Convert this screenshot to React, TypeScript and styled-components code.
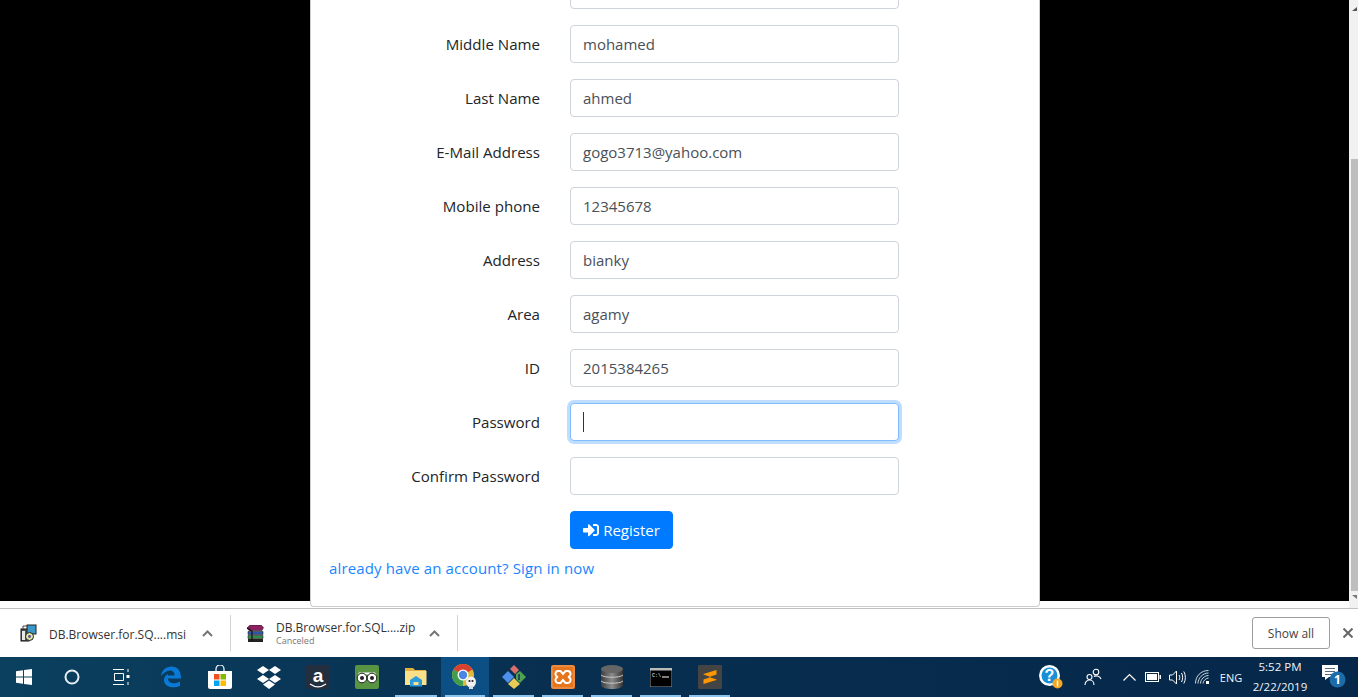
import React, { FC } from "react";
import styled, { createGlobalStyle } from "styled-components";
import { FaSignInAlt } from "react-icons/fa";

const UI_FONT = `"Open Sans", "Noto Sans", sans-serif`;

const fields = [
    { label: "", value: "" },
    { label: "Middle Name", value: "mohamed" },
    { label: "Last Name", value: "ahmed" },
    { label: "E-Mail Address", value: "gogo3713@yahoo.com" },
    { label: "Mobile phone", value: "12345678" },
    { label: "Address", value: "bianky" },
    { label: "Area", value: "agamy" },
    { label: "ID", value: "2015384265" },
    { label: "Password", value: "", focused: true },
    { label: "Confirm Password", value: "" },
];

const WindowsIcon = () => (
    <svg width="16" height="16" viewBox="0 0 16 16" fill="#fff">
        <path d="M0 2.300 7 1.200V7.500H0ZM8 1 16 0V7.500H8ZM0 8.500H7V14.800L0 13.700ZM8 8.500H16V16L8 15Z" />
    </svg>
);

const CortanaIcon = () => (
    <svg width="16" height="16" viewBox="0 0 16 16" fill="none">
        <circle cx="8" cy="8" r="6.500" stroke="#e8f0f5" strokeWidth="2" />
    </svg>
);

const TaskViewIcon = () => (
    <svg width="17" height="16" viewBox="0 0 17 16" fill="none" stroke="#fff">
        <path d="M0 .5H11M0 15.500H11M1.500 4.500H10.500V11.500H1.500ZM15 0V3M15 13V16" />
        <rect x="13.500" y="6" width="3" height="3" fill="#fff" stroke="none" />
    </svg>
);

const EdgeIcon = () => (
    <svg width="22" height="22" viewBox="0 0 22 22">
        <path
            fill="#0a78d7"
            d="M1 10C2 4 6 .5 11.500 .5 17 .5 21 4 21 12.500H8C8 17 14 19 20 15.500V20C13 23 4 21 4 14 4 11 5.500 9 8.500 7.500 7.500 9 7.500 10 7.500 9.500H14.500C14.500 6 12.500 4.500 10 4.500 6.500 4.500 3.500 7 1 10Z"
        />
    </svg>
);

const StoreIcon = () => (
    <svg width="24" height="24" viewBox="0 0 24 24">
        <path d="M8 6V4A4 4 0 0 1 16 4V6" fill="none" stroke="#fff" strokeWidth="1.200" />
        <path d="M0 6H24V22A2 2 0 0 1 22 24H2A2 2 0 0 1 0 22Z" fill="#fff" />
        <rect x="6" y="9" width="5.500" height="5.500" fill="#f25022" />
        <rect x="12.500" y="9" width="5.500" height="5.500" fill="#7fba00" />
        <rect x="6" y="15.500" width="5.500" height="5.500" fill="#00a4ef" />
        <rect x="12.500" y="15.500" width="5.500" height="5.500" fill="#ffb900" />
    </svg>
);

const DropboxIcon = () => (
    <svg width="24" height="23" viewBox="0 0 24 23" fill="#fff">
        <path d="M6 0 12 4 6 8 0 4ZM18 0 24 4 18 8 12 4ZM6 9 12 13 6 17 0 13ZM18 9 24 13 18 17 12 13ZM6 18.500 12 14.500 18 18.500 12 23Z" />
    </svg>
);

const AmazonIcon = () => (
    <svg width="24" height="24" viewBox="0 0 24 24">
        <rect width="24" height="24" rx="2" fill="#232f3e" />
        <text x="12" y="16.500" textAnchor="middle" fontFamily="Liberation Sans" fontWeight="700" fontSize="19" fill="#fff">a</text>
        <path d="M4 19C9 22.500 15 22.500 20 19" fill="none" stroke="#fff" strokeWidth="1.200" />
    </svg>
);

const TripAdvisorIcon = () => (
    <svg width="24" height="24" viewBox="0 0 24 24">
        <rect width="24" height="24" rx="2" fill="#589442" />
        <path d="M4 7.500H20L21 9.500H3Z" fill="#fff" />
        <circle cx="7" cy="13" r="4.800" fill="#fff" stroke="#222" />
        <circle cx="17" cy="13" r="4.800" fill="#fff" stroke="#222" />
        <circle cx="7" cy="13" r="2" fill="#222" />
        <circle cx="17" cy="13" r="2" fill="#222" />
    </svg>
);

const FolderIcon = () => (
    <svg width="22" height="20" viewBox="0 0 22 20">
        <path d="M0 1H8L10 3H21V5H0Z" fill="#e2b23d" />
        <rect y="4" width="21.500" height="14" fill="#fbe08c" />
        <path d="M5 18V13L11 9 17 13V18H13.500V15H8.500V18Z" fill="#2c9cdc" />
        <rect x="5" y="18" width="12" height="1.500" fill="#2c9cdc" />
    </svg>
);

const ChromeIcon = () => (
    <svg width="26" height="26" viewBox="0 0 26 26">
        <circle cx="11" cy="11" r="11" fill="#e0b93a" />
        <path d="M11 11 1.500 5.500A11 11 0 0 1 20.500 5.500Z" fill="#d8402f" />
        <path d="M11 11 1.500 5.500A11 11 0 0 0 11 22Z" fill="#3f9e4d" />
        <circle cx="11" cy="11" r="5.500" fill="#fff" />
        <circle cx="11" cy="11" r="4.200" fill="#4a86e0" />
        <ellipse cx="19" cy="18" rx="5" ry="5.500" fill="#f2f2f2" />
        <circle cx="17.500" cy="17" r="1.100" fill="#222" />
        <circle cx="20.500" cy="17" r="1.100" fill="#222" />
        <rect x="17" y="22" width="4" height="3" fill="#ddd" />
    </svg>
);

const GitGuiIcon = () => (
    <svg width="24" height="24" viewBox="0 0 24 24">
        <path d="M8 4 12 0 17 5 13 9Z" fill="#d9706a" />
        <path d="M0 12 6 6 12 12 6 18Z" fill="#4e90ee" />
        <path d="M14 9 18 6 24 12 18 18 14 14Z" fill="#4fa34e" />
        <path d="M6 19 12 13 18 19 12 24Z" fill="#e8cb55" />
        <path d="M17 9V15" stroke="#14304c" strokeWidth="1.500" />
    </svg>
);

const XamppIcon = () => (
    <svg width="24" height="24" viewBox="0 0 24 24">
        <rect width="24" height="24" rx="2" fill="#e5761e" />
        <rect x="1" y="1" width="22" height="22" rx="1.500" fill="none" stroke="#f0a066" />
        <path
            d="M8 6H9.500L12 9 14.500 6H16A3 3 0 0 1 17 12 3 3 0 0 1 16 18H14.500L12 15 9.500 18H8A3 3 0 0 1 7 12 3 3 0 0 1 8 6Z"
            fill="none"
            stroke="#fff"
            strokeWidth="2"
        />
    </svg>
);

const DatabaseIcon = () => (
    <svg width="22" height="24" viewBox="0 0 22 24">
        <defs>
            <linearGradient id="dbBody" x1="0" x2="1" y1="0" y2="0">
                <stop offset="0" stopColor="#3c3c3c" />
                <stop offset=".5" stopColor="#8c8c8c" />
                <stop offset="1" stopColor="#333" />
            </linearGradient>
        </defs>
        <path d="M0 4V20C0 22.500 5 24 11 24S22 22.500 22 20V4Z" fill="url(#dbBody)" />
        <ellipse cx="11" cy="4" rx="11" ry="4" fill="#666" />
        <path d="M0 10C3 13 19 13 22 10M0 16C3 19 19 19 22 16" fill="none" stroke="#c8c8c8" />
    </svg>
);

const CmdIcon = () => (
    <svg width="22" height="19" viewBox="0 0 22 19">
        <rect width="22" height="19" fill="#000" stroke="#999" />
        <rect width="22" height="2.500" fill="#bbb" />
        <text x="2" y="9" fontFamily="Liberation Mono" fontSize="5" fill="#fff">C:\</text>
        <path d="M12 9H19" stroke="#fff" />
    </svg>
);

const SublimeIcon = () => (
    <svg width="24" height="24" viewBox="0 0 24 24">
        <rect width="24" height="24" rx="1" fill="#444" />
        <path d="M5.500 9 18.500 5V9.500L11 12 18.500 14.500V15L5.500 19V14.500L13 12 5.500 9.500Z" fill="#ff9800" />
    </svg>
);

const tiles: { icon: React.ReactNode; open?: boolean; active?: boolean; width: number }[] = [
    { icon: <WindowsIcon />, width: 48 },
    { icon: <CortanaIcon />, width: 48 },
    { icon: <TaskViewIcon />, width: 50 },
    { icon: <EdgeIcon />, width: 49 },
    { icon: <StoreIcon />, width: 49 },
    { icon: <DropboxIcon />, width: 49 },
    { icon: <AmazonIcon />, width: 49 },
    { icon: <TripAdvisorIcon />, width: 49 },
    { icon: <FolderIcon />, width: 50, open: true },
    { icon: <ChromeIcon />, width: 48, open: true, active: true },
    { icon: <GitGuiIcon />, width: 49, open: true },
    { icon: <XamppIcon />, width: 49, open: true },
    { icon: <DatabaseIcon />, width: 49, open: true },
    { icon: <CmdIcon />, width: 49, open: true },
    { icon: <SublimeIcon />, width: 49, open: true },
];

const Chevron = () => (
    <svg width="11" height="7" viewBox="0 0 11 7" fill="none" stroke="#757575" strokeWidth="2">
        <path d="M1 6 5.500 1.500 10 6" />
    </svg>
);

const MsiIcon = () => (
    <svg width="17" height="18" viewBox="0 0 17 18">
        <rect x="1" y="5" width="8" height="12" fill="#555" stroke="#111" />
        <rect x="7" y="1" width="9" height="9" fill="#3a97c9" stroke="#222" />
        <path d="M2 7H5V16H2Z" fill="#e8e8e8" />
        <circle cx="9.500" cy="12.500" r="4" fill="#d9e8a0" stroke="#222" />
        <circle cx="9.500" cy="12.500" r="1.400" fill="#6a3fa0" />
        <path d="M3 5V2H7" fill="none" stroke="#444" />
    </svg>
);

const RarIcon = () => (
    <svg width="17" height="17" viewBox="0 0 17 17">
        <path d="M0 3 3 0H14L16.500 2.500 15 5.500H2Z" fill="#8e1f60" stroke="#222" strokeWidth=".6" />
        <path d="M1 6.500H16V9.500H1Z" fill="#2d56a8" stroke="#222" strokeWidth=".6" />
        <path d="M1 10.500H16V13.500H1Z" fill="#2e8c48" stroke="#222" strokeWidth=".6" />
        <path d="M1 14H16V17H1Z" fill="#222" />
        <path d="M0 3 5 6V16" fill="none" stroke="#111" strokeWidth="1.200" />
    </svg>
);

const HelpIcon = () => (
    <svg width="25" height="25" viewBox="0 0 25 25">
        <circle cx="10.500" cy="10.500" r="10.500" fill="#fff" />
        <circle cx="10.500" cy="10.500" r="8" fill="#1b8fd6" />
        <text x="10.500" y="16" textAnchor="middle" fontFamily="Liberation Sans" fontWeight="700" fontSize="16" fill="#fff">?</text>
        <circle cx="18.500" cy="18.500" r="5" fill="#f5a623" />
        <rect x="17.800" y="15.500" width="1.400" height="6" fill="#fff" />
    </svg>
);

const PeopleIcon = () => (
    <svg width="18" height="18" viewBox="0 0 18 18" fill="none" stroke="#fff" strokeWidth="1.100">
        <circle cx="12" cy="4" r="2.800" />
        <circle cx="5.500" cy="9" r="2.500" />
        <path d="M1 17C1 14 3 12 5.500 12S10 14 10 17M10 8.500C11 7.500 16 7.500 17 11" />
    </svg>
);

const CaretIcon = () => (
    <svg width="13" height="8" viewBox="0 0 13 8" fill="none" stroke="#fff" strokeWidth="1.200">
        <path d="M.5 7.500 6.500 1.500 12.500 7.500" />
    </svg>
);

const BatteryIcon = () => (
    <svg width="16" height="10" viewBox="0 0 16 10" fill="#fff">
        <path d="M0 0H14V10H0ZM1 1V9H13V1Z" fillRule="evenodd" />
        <rect x="2" y="2" width="10" height="6" />
        <rect x="14.500" y="3" width="1.500" height="4" />
    </svg>
);

const SpeakerIcon = () => (
    <svg width="17" height="15" viewBox="0 0 17 15" fill="none" stroke="#fff">
        <path d="M.5 5H3.500L7.500 1V14L3.500 10H.5Z" />
        <path d="M10 5C11 6.500 11 8.500 10 10M12.500 3C14 5.500 14 9.500 12.500 12M14.800 1.500C16.800 5 16.800 10 14.800 13.500" />
    </svg>
);

const WifiIcon = () => (
    <svg width="14" height="14" viewBox="0 0 14 14" fill="none" stroke="#cfd8df">
        <path d="M.5 13.500C.5 6 6 .5 13.500 .5M3 13.500C3 8 8 3 13.500 3M5.500 13.500C5.500 9.500 9.500 5.500 13.500 5.500M8 13.500C8 11 11 8 13.500 8" />
        <rect x="11" y="11" width="3" height="3" fill="#fff" stroke="none" />
    </svg>
);

const NotificationIcon = () => (
    <svg width="24" height="24" viewBox="0 0 24 24">
        <path d="M0 0H16V12H7L3 15V12H0Z" fill="#fff" />
        <path d="M3 3.500H13M3 6.500H13M3 9.500H10" stroke="#5a6a78" />
        <circle cx="15.500" cy="14.500" r="8" fill="#1b6ca8" />
        <text x="15.500" y="19" textAnchor="middle" fontFamily="Open Sans" fontWeight="700" fontSize="12" fill="#fff">1</text>
    </svg>
);

const App: FC = () => {
    return (
        <Screen>
            <GlobalStyle />
            <BrowserArea>
                <Page>
                    <Card>
                        {fields.map((field) => (
                            <FormRow key={field.label}>
                                <FieldLabel>{field.label}</FieldLabel>
                                <FieldBox $focused={field.focused}>
                                    {field.value}
                                    {field.focused && <Caret />}
                                </FieldBox>
                            </FormRow>
                        ))}
                        <FormRow>
                            <span />
                            <RegisterButton>
                                <FaSignInAlt size={16} />
                                Register
                            </RegisterButton>
                        </FormRow>
                        <SignInLink href="#">already have an account? Sign in now</SignInLink>
                    </Card>
                </Page>
                <Scrollbar>
                    <ScrollArrow />
                    <ScrollThumb />
                    <ScrollArrow $down />
                </Scrollbar>
            </BrowserArea>
            <DownloadBar>
                <DownloadItem $width={231}>
                    <DownloadIcon><MsiIcon /></DownloadIcon>
                    <DownloadText>
                        <DownloadName>DB.Browser.for.SQ....msi</DownloadName>
                    </DownloadText>
                    <Chevron />
                </DownloadItem>
                <DownloadItem $width={227}>
                    <DownloadIcon><RarIcon /></DownloadIcon>
                    <DownloadText>
                        <DownloadName>DB.Browser.for.SQL....zip</DownloadName>
                        <DownloadStatus>Canceled</DownloadStatus>
                    </DownloadText>
                    <Chevron />
                </DownloadItem>
                <ShowAll>Show all</ShowAll>
                <CloseGlyph viewBox="0 0 10 10">
                    <path d="M.5 .5 9.500 9.500M9.500 .5 .5 9.500" />
                </CloseGlyph>
            </DownloadBar>
            <Taskbar>
                {tiles.map((tile, i) => (
                    <Tile key={i} $width={tile.width} $open={tile.open} $active={tile.active}>
                        {tile.icon}
                    </Tile>
                ))}
                <TraySpacer />
                <TrayCell $width={42}><HelpIcon /></TrayCell>
                <TrayCell $width={42}><PeopleIcon /></TrayCell>
                <TrayCell $width={30}><CaretIcon /></TrayCell>
                <TrayCell $width={18}><BatteryIcon /></TrayCell>
                <TrayCell $width={30}><SpeakerIcon /></TrayCell>
                <TrayCell $width={20}><WifiIcon /></TrayCell>
                <TrayCell $width={38}>ENG</TrayCell>
                <Clock>
                    <span>5:52 PM</span>
                    <span>2/22/2019</span>
                </Clock>
                <TrayCell $width={48}><NotificationIcon /></TrayCell>
            </Taskbar>
        </Screen>
    );
};

export default App;

const GlobalStyle = createGlobalStyle`
    html, body {
        margin: 0;
        height: 100%;
        overflow: hidden;
    }
    body {
        font-family: ${UI_FONT};
    }
`;

const Screen = styled.div`
    width: 1358px;
    height: 697px;
    display: flex;
    flex-direction: column;
`;

const BrowserArea = styled.div`
    height: 608px;
    display: flex;
    overflow: hidden;
`;

const Page = styled.div`
    flex: 1;
    background: linear-gradient(#000 601px, #fff 601px);
`;

const Card = styled.div`
    box-sizing: border-box;
    width: 730px;
    height: 648px;
    margin: -41px 0 0 310px;
    padding: 11px 18px 0;
    display: flex;
    flex-direction: column;
    gap: 16px;
    background: #fff;
    border: 1px solid rgba(0, 0, 0, 0.2);
    border-radius: 4px;
`;

const FormRow = styled.div`
    display: grid;
    grid-template-columns: 211px 329px;
    column-gap: 30px;
    align-items: center;
`;

const FieldLabel = styled.label`
    text-align: right;
    font-size: 15.100px;
    color: #212529;
`;

const FieldBox = styled.div<{ $focused?: boolean }>`
    box-sizing: border-box;
    height: 38px;
    padding: 0 12px;
    display: flex;
    align-items: center;
    font-size: 15px;
    color: #495057;
    background: #fff;
    border: 1px solid ${(p) => (p.$focused ? "#80bdff" : "#ced4da")};
    border-radius: 4px;
    box-shadow: ${(p) => (p.$focused ? "0 0 0 3px rgba(0, 123, 255, 0.25)" : "none")};
`;

const Caret = styled.span`
    width: 1px;
    height: 20px;
    background: #333;
`;

const RegisterButton = styled.button`
    justify-self: start;
    box-sizing: border-box;
    width: 103px;
    height: 38px;
    padding: 0;
    display: flex;
    align-items: center;
    justify-content: center;
    gap: 4px;
    font: 15px ${UI_FONT};
    color: #fff;
    background: #007bff;
    border: 1px solid #007bff;
    border-radius: 4px;
`;

const SignInLink = styled.a`
    margin-top: -9px;
    font-size: 15px;
    letter-spacing: 0.14px;
    line-height: 24px;
    color: #1a85ff;
    text-decoration: none;
`;

const Scrollbar = styled.div`
    width: 9px;
    padding-left: 2px;
    box-sizing: border-box;
    display: flex;
    flex-direction: column;
    background: #f1f1f1;
`;

const ScrollArrow = styled.div<{ $down?: boolean }>`
    height: ${(p) => (p.$down ? "17px" : "159px")};
    &::before {
        content: "";
        display: block;
        margin: ${(p) => (p.$down ? "4px" : "7px")} 0 0 1px;
        width: 0;
        height: 0;
        border-style: solid;
        border-width: ${(p) => (p.$down ? "4px 0 0 5px" : "0 0 4px 5px")};
        border-color: ${(p) =>
            p.$down ? "#777 transparent transparent transparent" : "transparent transparent #555 transparent"};
    }
`;

const ScrollThumb = styled.div`
    flex: 1;
    background: #bebebe;
`;

const DownloadBar = styled.div`
    box-sizing: border-box;
    height: 49px;
    display: flex;
    align-items: center;
    background: #fff;
    border-top: 1px solid #c0c0c0;
`;

const DownloadItem = styled.div<{ $width: number }>`
    box-sizing: border-box;
    width: ${(p) => p.$width}px;
    height: 36px;
    padding: 0 17px 0 20px;
    display: flex;
    align-items: center;
    border-right: 1px solid #d2d2d2;
    & + & {
        padding-left: 16px;
    }
`;

const DownloadIcon = styled.div`
    width: 29px;
    display: flex;
`;

const DownloadText = styled.div`
    flex: 1;
    display: flex;
    flex-direction: column;
    min-width: 0;
`;

const DownloadName = styled.span`
    font-size: 12px;
    line-height: 15px;
    color: #333;
    white-space: nowrap;
    &:only-child {
        padding-top: 2px;
    }
`;

const DownloadStatus = styled.span`
    font-size: 9px;
    line-height: 11px;
    color: #777;
`;

const ShowAll = styled.button`
    box-sizing: border-box;
    width: 78px;
    height: 32px;
    margin-left: auto;
    padding: 0;
    font: 12px ${UI_FONT};
    color: #444;
    background: #fff;
    border: 1px solid #9e9e9e;
    border-radius: 3px;
`;

const CloseGlyph = styled.svg`
    width: 10px;
    height: 10px;
    margin: 0 5px 0 13px;
    fill: none;
    stroke: #666;
    stroke-width: 2;
`;

const Taskbar = styled.div`
    height: 40px;
    display: flex;
    background: linear-gradient(90deg, #0b405f 0%, #082f50 40%, #05274a 100%);
    color: #fff;
`;

const Tile = styled.div<{ $width: number; $open?: boolean; $active?: boolean }>`
    position: relative;
    width: ${(p) => p.$width}px;
    display: flex;
    align-items: center;
    justify-content: center;
    background: ${(p) => (p.$active ? "#0b4f85" : "transparent")};
    &::after {
        content: "";
        position: absolute;
        left: 4px;
        right: 4px;
        bottom: 0;
        height: 2px;
        background: ${(p) => (p.$open ? "#8cc4ee" : "transparent")};
    }
`;

const TraySpacer = styled.div`
    flex: 1;
`;

const TrayCell = styled.div<{ $width: number }>`
    width: ${(p) => p.$width}px;
    display: flex;
    align-items: center;
    justify-content: center;
    font-size: 11px;
    color: #f0f4f7;
`;

const Clock = styled.div`
    width: 60px;
    display: flex;
    flex-direction: column;
    align-items: center;
    justify-content: center;
    font-size: 11.500px;
    line-height: 20px;
    color: #f0f4f7;
`;
